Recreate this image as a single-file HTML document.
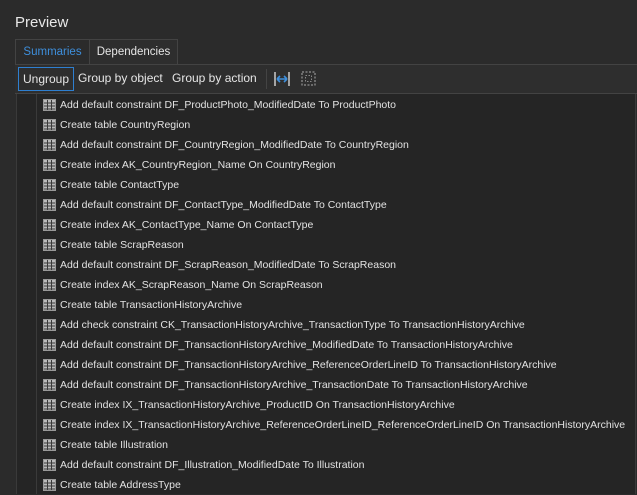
<!DOCTYPE html>
<html><head><style>
body{margin:0;width:637px;height:494px;background:#2b2b2b;font-family:"Liberation Sans",sans-serif;color:#e6e6e6;position:relative;overflow:hidden}
.t{position:absolute;left:15px;top:14px;font-size:15px;color:#e8e8e8}
.tab{position:absolute;top:39px;height:25px;font-size:11.5px;line-height:25px;text-align:center;box-sizing:border-box}
.strip{position:absolute;left:15px;right:0;top:64px;height:30px;border-top:1px solid #434343;border-bottom:1px solid #434343;background:#2e2e2e;box-sizing:border-box}
.btn{position:absolute;top:67px;height:24px;line-height:22px;font-size:12px;box-sizing:border-box;padding:0 4px}
.list{position:absolute;left:16px;top:94px;width:620px;height:400px;background:#252525;border-left:1px solid #3a3a3a;border-right:1px solid #3a3a3a;box-sizing:border-box}
.gut{position:absolute;left:0;top:0;width:19px;height:100%;border-right:1px solid #3a3a3a}
.row{position:absolute;left:26px;height:20px;line-height:20px;font-size:10.5px;white-space:nowrap;color:#e2e2e2}
.row svg{position:absolute;left:0;top:4px}
.row span{position:absolute;left:17px}
</style></head><body>
<div class="t">Preview</div>
<div class="tab" style="left:15px;width:75px;border:1px solid #434343;border-bottom:none;color:#3e8fdc">Summaries</div>
<div class="tab" style="left:89px;width:89px;border:1px solid #434343;border-bottom:none;background:#2e2e2e">Dependencies</div>
<div class="strip"></div>
<div class="btn" style="left:18px;width:56px;border:1px solid #2e7fd0;">Ungroup</div>
<div class="btn" style="left:74px">Group by object</div>
<div class="btn" style="left:168px">Group by action</div>
<div style="position:absolute;left:266px;top:69px;width:1px;height:20px;background:#444"></div>
<svg style="position:absolute;left:274px;top:71px" width="16" height="16"><path d="M1 1v14M15 1v14" stroke="#ccc" stroke-width="1.5"/><path d="M3 8h10M3 8l3-3M3 8l3 3M13 8l-3-3M13 8l-3 3" stroke="#3e8fdc" stroke-width="1.6" fill="none"/></svg>
<svg style="position:absolute;left:301px;top:71px" width="15" height="15"><rect x="1" y="1" width="13" height="13" fill="none" stroke="#aaa" stroke-dasharray="2 1.5"/><rect x="4.5" y="4.5" width="6" height="6" fill="none" stroke="#888" stroke-dasharray="1.5 1.5"/></svg>
<div class="list"><div class="gut"></div>
<div id="rows"></div></div>
<script>
var r=["Add default constraint DF_ProductPhoto_ModifiedDate To ProductPhoto","Create table CountryRegion","Add default constraint DF_CountryRegion_ModifiedDate To CountryRegion","Create index AK_CountryRegion_Name On CountryRegion","Create table ContactType","Add default constraint DF_ContactType_ModifiedDate To ContactType","Create index AK_ContactType_Name On ContactType","Create table ScrapReason","Add default constraint DF_ScrapReason_ModifiedDate To ScrapReason","Create index AK_ScrapReason_Name On ScrapReason","Create table TransactionHistoryArchive","Add check constraint CK_TransactionHistoryArchive_TransactionType To TransactionHistoryArchive","Add default constraint DF_TransactionHistoryArchive_ModifiedDate To TransactionHistoryArchive","Add default constraint DF_TransactionHistoryArchive_ReferenceOrderLineID To TransactionHistoryArchive","Add default constraint DF_TransactionHistoryArchive_TransactionDate To TransactionHistoryArchive","Create index IX_TransactionHistoryArchive_ProductID On TransactionHistoryArchive","Create index IX_TransactionHistoryArchive_ReferenceOrderLineID_ReferenceOrderLineID On TransactionHistoryArchive","Create table Illustration","Add default constraint DF_Illustration_ModifiedDate To Illustration","Create table AddressType"];
var ic='<svg width="13" height="12"><rect x="0.5" y="0.5" width="12" height="11" fill="#bbb"/><path d="M1 4h11M1 7h11M1 10h11M4.5 1v10M8.5 1v10" stroke="#3a3a3a" stroke-width="1"/><rect x="0.5" y="0.5" width="12" height="11" fill="none" stroke="#999"/></svg>';
var h="";r.forEach(function(s,i){h+='<div class="row" style="top:'+(i*20+1)+'px">'+ic+'<span>'+s+'</span></div>'});
document.getElementById("rows").innerHTML=h;
</script>
</body></html>
